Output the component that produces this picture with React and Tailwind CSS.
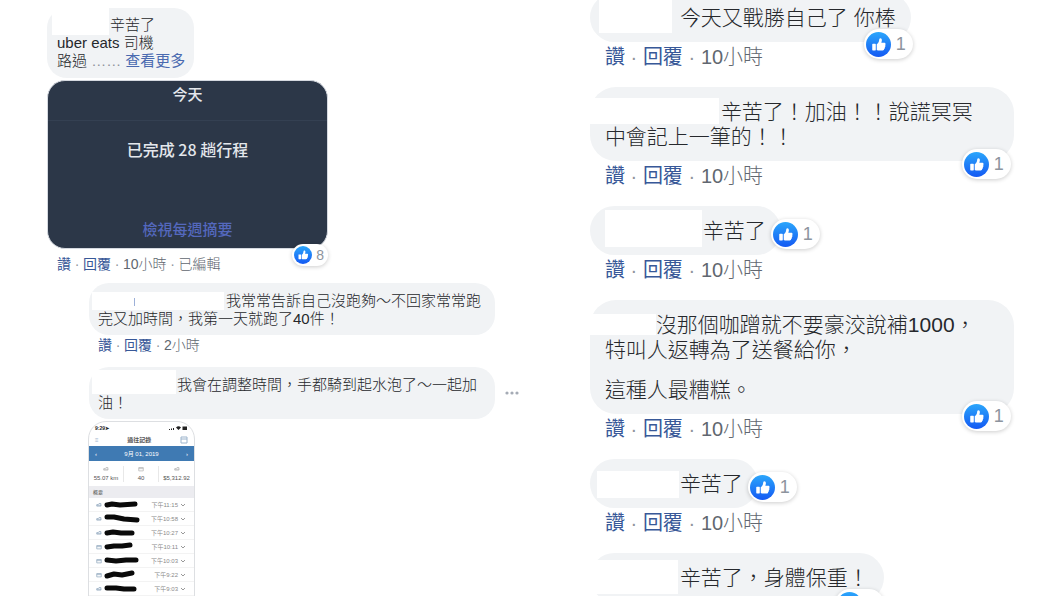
import React from "react";

const cjk = "font-['Liberation_Sans','Noto_Sans_CJK_TC',sans-serif]";

const LikeBadge = ({ count, small, className }) => (
  <span
    className={`absolute flex items-center rounded-full bg-white shadow-[0_1px_4px_rgba(0,0,0,0.2)] font-normal text-[#8d949e] ${
      small ? "h-[22px] gap-1 pl-0.5 pr-1 text-sm" : "h-[30px] gap-[5px] pl-0.5 pr-[7px] text-lg"
    } ${className}`}
  >
    <svg viewBox="0 0 24 24" className={small ? "size-[18px]" : "size-[25px]"} aria-hidden="true">
      <defs>
        <linearGradient id="like" x1="0" y1="0" x2="0" y2="1">
          <stop offset="0" stopColor="#2ba6fb" />
          <stop offset="1" stopColor="#1459f3" />
        </linearGradient>
      </defs>
      <circle cx="12" cy="12" r="12" fill="url(#like)" />
      <path
        fill="#fff"
        d="M6.6 11.2h2.2c.4 0 .6.2.6.6v5.3c0 .4-.2.6-.6.6H6.6c-.3 0-.6-.2-.6-.6v-5.3c0-.4.3-.6.6-.6zM10.3 17.2v-5.4c1.400-1 2.100-2.400 2.300-4 .1-1.200.4-1.900 1.100-1.900 1.300 0 1.700 1.300 1.500 2.500-.1.700-.3 1.300-.5 1.800h2.800c.8 0 1.300.6 1.300 1.300 0 .5-.2.8-.5 1 .3.3.4.6.4.9 0 .6-.3.9-.7 1.100.2.300.200.5.2.7 0 .5-.3.900-.8 1.100.1.900-.5 1.400-1.400 1.400h-3.200c-1 0-1.800-.2-2.500-.5z"
      />
    </svg>
    {count}
  </span>
);

// blank patch over the commenter's name; `box` places the patch, `space` is the room kept in the line
const HiddenName = ({ space, box }) => (
  <span className={`relative inline-block h-0 ${space}`}>
    <span className={`absolute bg-white ${box}`} />
  </span>
);

const Dot = ({ small }) => (
  <span className={`text-center text-[#90949c] ${small ? "w-3" : "w-[18px]"}`}>·</span>
);

const Actions = ({ items, small, className }) => (
  <div className={`flex items-center text-[#616770] ${small ? "text-sm" : "text-xl"} ${className}`}>
    {["讚", "回覆"].map((label, i) => (
      <React.Fragment key={label}>
        {i > 0 && <Dot small={small} />}
        <button className="font-normal text-[#385898]">{label}</button>
      </React.Fragment>
    ))}
    {items.map((item) => (
      <React.Fragment key={item}>
        <Dot small={small} />
        <span>{item}</span>
      </React.Fragment>
    ))}
  </div>
);

const comments = [
  {
    space: "w-[75px]",
    box: "-left-1.5 -top-[36px] h-11 w-[73px]",
    lines: ["今天又戰勝自己了 你棒"],
    time: "10小時",
    badge: "-right-0.5 -bottom-[17px]",
  },
  {
    space: "w-[116px]",
    box: "-left-[15px] -top-[21px] h-[26px] w-[129px]",
    lines: ["辛苦了！加油！！說謊冥冥", "中會記上一筆的！！"],
    time: "10小時",
    badge: "right-[3px] -bottom-[18px]",
  },
  {
    space: "w-[98px]",
    box: "left-0 -top-[28px] h-[37px] w-[97px]",
    lines: ["辛苦了"],
    time: "10小時",
    badge: "-right-[39px] top-[13px]",
  },
  {
    space: "w-[51px]",
    box: "-left-[15px] -top-[18px] h-[21px] w-[66px]",
    lines: ["沒那個咖蹭就不要豪洨說補1000，", "特叫人返轉為了送餐給你，"],
    more: "這種人最糟糕。",
    time: "10小時",
    badge: "right-[3px] -bottom-[17px]",
  },
  {
    space: "w-[75px]",
    box: "-left-2 -top-[20px] h-[27px] w-[82px]",
    lines: ["辛苦了"],
    time: "10小時",
    badge: "-right-[39px] top-[13px]",
  },
  {
    space: "w-[75px]",
    box: "-left-[15px] -top-[25px] h-[34px] w-[88px]",
    lines: ["辛苦了，身體保重！"],
    badge: "right-0 -bottom-[17px]",
  },
];

const trips = [
  { time: "下午11:15", car: true, d: "M3 5 L8 4 L16 5 L31 4" },
  { time: "下午10:58", car: true, d: "M3 3 L10 3 L20 5 L33 6" },
  { time: "下午10:27", car: true, d: "M3 5 L9 4 L17 5 L28 5" },
  { time: "下午10:11", d: "M3 5 L10 4 L18 4 L26 3" },
  { time: "下午10:03", d: "M3 4 L12 5 L22 4 L32 4" },
  { time: "下午9:22", d: "M3 6 L10 4 L18 5 L28 3" },
  { time: "下午9:03", car: true, d: "M3 4 L12 4 L20 5 L30 5" },
];

const TripIcon = ({ car, color = "#93a9bf" }) => (
  <svg viewBox="0 0 8 8" className="size-1.5 shrink-0" fill="none" stroke={color} strokeWidth="1">
    {car ? <path d="M1 5.500V3.500h2L4 2h2.500v3.500zM1 4.300h6" /> : <path d="M1 2h6v4.500H1zM1 3.500h6" />}
  </svg>
);

const PhoneShot = () => (
  <div className="-ml-px mt-0.5 w-[107px] overflow-hidden rounded-t-[18px] border border-[#dddfe2] bg-white text-[6px] leading-2 font-normal text-[#555]">
    <div className="flex h-3 items-center justify-between px-1.5 text-[5px] font-bold text-[#222]">
      <span>9:29➤</span>
      <svg viewBox="0 0 20 6" className="h-1.5 w-5" fill="#222">
        <path d="M1 4h1v1H1zM3 3.500h1V5H3zM5 3h1v2H5zM8 2.500Q10.500 0 13 2.500L10.500 5zM14.500 1.500h4.500v3.500h-4.500z" />
      </svg>
    </div>
    <div className="flex h-3 items-center justify-between px-1.5 font-bold text-[#555]">
      <span className="font-normal text-[#9cb4cc]">≡</span>
      <span>過往記錄</span>
      <svg viewBox="0 0 8 8" className="size-2" fill="none" stroke="#9cb4cc">
        <path d="M1 1h6v6H1zM1 3h6" />
      </svg>
    </div>
    <div className="flex h-[15px] items-center justify-between bg-[#3f7ab3] px-1.5 text-white">
      <span>‹</span>
      <span>9月 01, 2019</span>
      <span>›</span>
    </div>
    <div className="grid h-[25px] grid-cols-3 items-center divide-x divide-[#e8e8e8] text-center">
      {["55.07 km", "40", "$5,312.92"].map((stat, i) => (
        <div key={stat} className="flex flex-col items-center gap-0.5">
          <TripIcon car={i !== 1} color="#b5b5b5" />
          <span className="whitespace-nowrap">{stat}</span>
        </div>
      ))}
    </div>
    <div className="flex h-3 items-center bg-[#ececf0] px-1 text-[5px]">概要</div>
    {trips.map((trip) => (
      <div key={trip.time} className="flex h-3.5 items-center gap-0.5 border-b border-[#f3f3f3] pl-[7px] pr-2">
        <TripIcon car={trip.car} />
        <svg viewBox="0 0 36 9" className="h-[9px] w-9" fill="none" stroke="#0a0a0a">
          <path d={trip.d} strokeWidth="5" strokeLinecap="round" strokeLinejoin="round" />
        </svg>
        <span className="ml-auto whitespace-nowrap text-[#8a8a8a]">{trip.time}</span>
        <svg viewBox="0 0 6 6" className="size-1.5 shrink-0" fill="none" stroke="#999">
          <path d="M1 2l2 2 2-2" />
        </svg>
      </div>
    ))}
  </div>
);

const LeftThread = () => (
  <section className="min-w-0 pl-[47px] pt-2 text-[15px] leading-[18px] text-[#26282c]">
    <div className="w-fit rounded-[20px] bg-[#f1f3f5] py-2 pl-2.5 pr-[9px]">
      <HiddenName space="w-[53px]" box="-left-[5px] -top-[23px] h-7 w-[57px]" />
      辛苦了
      <br />
      uber eats 司機
      <br />
      路過 <span className="text-[#90949c]">……</span>{" "}
      <a href="#more" className="font-normal text-[#4a6ab0]">查看更多</a>
    </div>

    <div className="relative mt-0.5 flex h-[169px] w-[281px] flex-col items-center rounded-[18px] border border-[#d5d9e0] bg-[#2c3748] font-['Noto_Sans_CJK_TC',sans-serif] font-medium text-[#e4e7ec]">
      <div className="flex h-10 w-full justify-center border-b border-[#344052] pt-1">今天</div>
      <p className="mt-[18px] text-base leading-5">已完成 28 趟行程</p>
      <a href="#weekly" className="mt-auto mb-2.5 text-[#5468bd]">檢視每週摘要</a>
      <LikeBadge count={8} small className="-right-px -bottom-[18px] font-['Liberation_Sans',sans-serif]" />
    </div>
    <Actions small items={["10小時", "已編輯"]} className="mb-1 h-[30px] pl-2.5" />

    <div className="pl-[42px]">
      <div className="max-w-[406px] whitespace-pre-line rounded-[20px] bg-[#f1f3f5] pt-[9px] pb-[7px] pl-[9px]">
        <HiddenName
          space="w-32"
          box="-left-1.5 -top-[14px] h-[18px] w-[132px] before:absolute before:left-[42px] before:top-1.5 before:h-2 before:w-px before:bg-[#9db0d8]"
        />
        {"我常常告訴自己沒跑夠～不回家常常跑\n完又加時間，我第一天就跑了40件！"}
      </div>
      <Actions small items={["2小時"]} className="mb-3 h-5 pl-[9px]" />

      <div className="flex items-center gap-2.5">
        <div className="w-[406px] whitespace-pre-line rounded-[20px] bg-[#f1f3f5] pt-[9px] pb-[7px] pl-[9px]">
          <HiddenName space="w-[79px]" box="-left-1.5 -top-[20px] h-6 w-[84px]" />
          {"我會在調整時間，手都騎到起水泡了～一起加\n油！"}
        </div>
        <button aria-label="更多選項" className="text-[#a5abb5]">
          <svg viewBox="0 0 14 4" className="h-1 w-3.5" fill="currentColor">
            <circle cx="2" cy="2" r="1.600" />
            <circle cx="7" cy="2" r="1.600" />
            <circle cx="12" cy="2" r="1.600" />
          </svg>
        </button>
      </div>
      <PhoneShot />
    </div>
  </section>
);

const Comment = ({ space, box, lines, more, time, badge }) => (
  <article>
    <div
      className={`relative max-w-[424px] rounded-[26px] bg-[#f1f3f5] px-[15px] py-3 ${
        lines.length > 1 ? "w-full" : "w-fit"
      }`}
    >
      <p>
        <HiddenName space={space} box={box} />
        {lines.map((line, i) => (
          <React.Fragment key={line}>
            {i > 0 && <br />}
            {line}
          </React.Fragment>
        ))}
      </p>
      {more && <p className="mt-[15px]">{more}</p>}
      <LikeBadge count={1} className={badge} />
    </div>
    {time && <Actions items={[time]} className="mb-[15px] h-[30px] pl-[15px]" />}
  </article>
);

export default function App() {
  return (
    <main className={`grid h-screen grid-cols-[5fr_4fr] overflow-hidden bg-white font-light ${cjk}`}>
      <LeftThread />
      <section className="-mt-[7px] min-w-0 pl-px text-[21px] leading-[25px] text-[#26282c]">
        {comments.map((comment, i) => (
          <Comment key={i} {...comment} />
        ))}
      </section>
    </main>
  );
}
